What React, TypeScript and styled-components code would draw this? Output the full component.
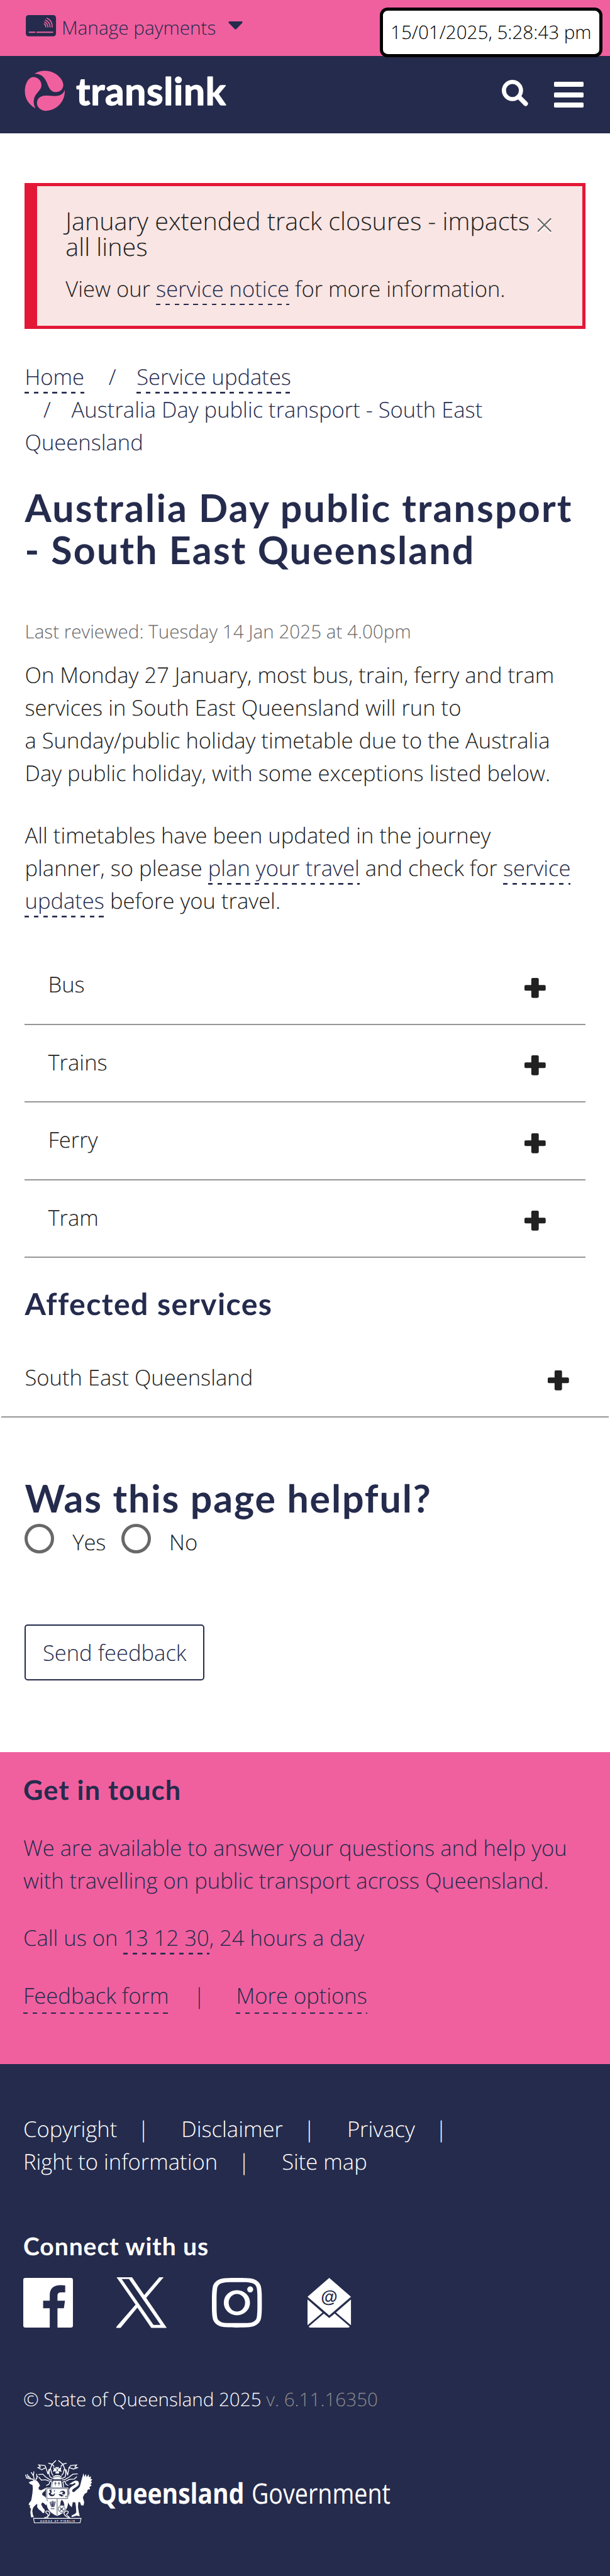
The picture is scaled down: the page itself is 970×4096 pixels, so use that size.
import React from "react";
import styled, { createGlobalStyle } from "styled-components";

const NAVY = "#252b4c";
const PINK = "#f0609f";
const INK = "#212121";
const GREY = "#686868";

/* Converts design pixels (1179 wide artboard) to page pixels (970 wide). */
const u = (n: number) => `${((n * 970) / 1179).toFixed(3)}px`;

const Global = createGlobalStyle`
  html, body { margin: 0; padding: 0; background: #fff; }
  body {
    font-family: "Open Sans", "Noto Sans", sans-serif;
    font-weight: 300;
    font-size: ${u(42)};
    line-height: ${u(63)};
    color: ${INK};
    text-rendering: geometricPrecision;
  }
  * { box-sizing: border-box; }
  h1, h2, h3, p { margin: 0; }
  svg { display: block; flex: none; overflow: visible; }
`;

const Page = styled.div`
  width: ${u(1179)};
  height: 4096px;
  overflow: hidden;
  display: flex;
  flex-direction: column;
  position: relative;
`;

const TopBar = styled.div`
  height: ${u(108)};
  background: ${PINK};
  color: ${NAVY};
  display: flex;
  align-items: flex-start;
  padding: ${u(26.5)} 0 0 ${u(49.5)};
  flex: none;
`;

const CardIcon = styled.svg`
  width: ${u(58.5)};
  height: ${u(41)};
  margin-top: ${u(2.5)};
`;

const Manage = styled.span`
  font-size: ${u(36.2)};
  line-height: ${u(54)};
  margin-left: ${u(11)};
  width: ${u(322)};
  white-space: nowrap;
`;

const Caret = styled.svg`
  width: ${u(28)};
  height: ${u(16)};
  margin-top: ${u(15)};
`;

const Clock = styled.div`
  position: absolute;
  top: ${u(15)};
  left: ${u(734)};
  width: ${u(430)};
  height: ${u(96)};
  border: 5px solid #000;
  border-radius: ${u(15)};
  background: #fff;
  color: #000;
  font-size: ${u(36)};
  line-height: ${u(83)};
  text-align: center;
  white-space: nowrap;
`;

const Header = styled.header`
  height: ${u(150)};
  background: ${NAVY};
  display: flex;
  align-items: flex-start;
  padding: ${u(28)} ${u(51)} 0 ${u(47.5)};
  flex: none;
`;

const Brand = styled.svg`
  width: ${u(393)};
  height: ${u(79)};
  margin-right: auto;
`;

const SearchIcon = styled.svg`
  width: ${u(51)};
  height: ${u(51)};
  margin: ${u(18)} ${u(50)} 0 0;
`;

const Burger = styled.div`
  width: ${u(57)};
  margin-top: ${u(22)};
  display: grid;
  gap: ${u(10.5)};
`;

const Bar = styled.i`
  height: ${u(9.8)};
  border-radius: ${u(2)};
  background: #fff;
`;

const Main = styled.main`
  padding: 0 ${u(48)};
  height: ${u(3128)};
  flex: none;
`;

const Alert = styled.section`
  position: relative;
  margin-top: ${u(96)};
  height: ${u(282)};
  background: #f9e5e3;
  border: 5px solid #e31836;
  border-left-width: 20px;
  padding: ${u(41.7)} 0 0 ${u(54.5)};
  white-space: nowrap;
`;

const AlertTitle = styled.p`
  font-size: ${u(48)};
  line-height: ${u(51)};
  margin-bottom: ${u(23.3)};
`;

const Close = styled.svg`
  position: absolute;
  top: ${u(60)};
  right: ${u(57.5)};
  width: ${u(29)};
  height: ${u(31)};
`;

const Link = styled.a`
  color: ${NAVY};
  padding-bottom: ${u(3.3)};
  background: repeating-linear-gradient(
      90deg,
      ${NAVY} 0 ${u(9)},
      transparent ${u(9)} ${u(18)}
    )
    left bottom / 100% ${u(3.3)} no-repeat;
`;

const Crumbs = styled.nav`
  margin-top: ${u(62)};
  color: ${NAVY};
  white-space: nowrap;
`;

const Slash = styled.span`
  margin: 0 ${u(39.8)} 0 ${u(36)};
`;

const Title = styled.h1<{ $top: number; $track: number }>`
  font-family: Lato, "Open Sans", sans-serif;
  font-weight: 700;
  color: ${NAVY};
  font-size: ${u(74)};
  line-height: ${u(81)};
  letter-spacing: ${(p) => u(p.$track)};
  margin-top: ${(p) => u(p.$top)};
  white-space: nowrap;
`;

const SubTitle = styled(Title)<{ $size: number; $line: number; $color?: string }>`
  font-size: ${(p) => u(p.$size)};
  line-height: ${(p) => u(p.$line)};
  color: ${(p) => p.$color ?? NAVY};
`;

const Reviewed = styled.p`
  margin-top: ${u(91.3)};
  font-size: ${u(36)};
  line-height: ${u(54)};
  color: ${GREY};
`;

const Para = styled.p<{ $top: number }>`
  margin-top: ${(p) => u(p.$top)};
  white-space: nowrap;
`;

const Accordion = styled.div`
  margin-top: ${u(57.6)};
`;

const Row = styled.div<{ $wide?: boolean }>`
  height: ${u(150)};
  display: flex;
  justify-content: space-between;
  border-bottom: ${u(3)} solid #969696;
  margin: ${(p) => (p.$wide ? `${u(32.8)} ${u(-45)} 0` : "0")};
  padding: ${u(41.5)} ${u(76)} 0 ${u(45)};
`;

const PlusIcon = styled.svg`
  width: ${u(41)};
  height: ${u(38.5)};
  margin-top: ${u(17.5)};
`;

const Choices = styled.div`
  margin-top: ${u(8)};
  height: ${u(57)};
  display: flex;
`;

const Radio = styled.label<{ $width: number }>`
  display: flex;
  width: ${(p) => u(p.$width)};
  gap: ${u(35)};
`;

const Dot = styled.i`
  width: ${u(57)};
  height: ${u(57)};
  border: 5px solid ${GREY};
  border-radius: 50%;
  flex: none;
`;

const RadioText = styled.span`
  margin-top: ${u(5.2)};
`;

const Button = styled.button`
  display: block;
  margin-top: ${u(138)};
  width: ${u(347)};
  height: ${u(108)};
  padding: ${u(2)} 0 0;
  border: ${u(3)} solid ${NAVY};
  border-radius: ${u(6)};
  background: #fff;
  color: ${NAVY};
  font: inherit;
  white-space: nowrap;
`;

const Contact = styled.section`
  height: ${u(603)};
  flex: none;
  background: ${PINK};
  color: ${NAVY};
  padding-left: ${u(45)};
`;

const LinkRow = styled.div<{ $top: number }>`
  margin-top: ${(p) => u(p.$top)};
  display: flex;
  flex-wrap: wrap;
  white-space: nowrap;
`;

const Sep = styled.span<{ $width: number; $at: number }>`
  width: ${(p) => u(p.$width)};
  padding-left: ${(p) => u(p.$at)};
`;

const Footer = styled.footer`
  flex: 1;
  background: ${NAVY};
  color: #fff;
  padding: 0 ${u(48)} 0 ${u(45)};
`;

const Social = styled.div`
  margin-top: ${u(31)};
  display: flex;
  height: ${u(98)};
`;

const SocialIcon = styled.svg<{ $w: number; $h: number; $x: number }>`
  width: ${(p) => u(p.$w)};
  height: ${(p) => u(p.$h)};
  margin-left: ${(p) => u(p.$x)};
  align-self: center;
`;

const Legal = styled.p`
  margin-top: ${u(111.5)};
  font-size: ${u(36)};
  line-height: ${u(54)};
`;

const Version = styled.span`
  color: #8c8c8c;
`;

const Gov = styled.svg`
  margin: ${u(87.5)} 0 0 ${u(3)};
  width: ${u(720)};
  height: ${u(126)};
`;

const Plus = () => (
  <PlusIcon viewBox="0 0 41 38.5">
    <rect x="13.2" width="14.4" height="38.5" rx="2.6" fill={INK} />
    <rect y="13.7" width="41" height="11" rx="2.6" fill={INK} />
  </PlusIcon>
);

const Crest = () => (
  <g fill="#fff" stroke="none">
    {/* deer */}
    <path d="M78 198 L92 191 L108 188 L118 189 L122 186 L128 191 L138 203 L144 218 L136 224 L136 238 L150 243 L165 236 L180 229 L172 246 L158 258 L156 270 L174 282 L184 300 L186 318 L178 330 L166 318 L158 314 L150 324 L160 344 L172 358 L168 374 L160 376 L150 364 L136 354 L127 340 L128 322 L118 328 L104 344 L99 362 L102 384 L108 398 L92 400 L88 372 L91 350 L84 342 L86 328 L78 330 L80 318 L92 304 L96 284 L100 258 L102 230 L100 212 L88 208 Z" />
    <path d="M110 190 L100 178 L84 178 M100 178 L66 172 L60 152 M76 174 L70 150 M92 178 L76 160 M112 190 L106 160 L92 138 M106 160 L108 134 M116 188 L126 172 L124 148 M120 180 L130 160" fill="none" stroke="#fff" strokeWidth="5" />
    {/* brolga */}
    <path d="M312 209 L336 192 L350 187 C368 186 374 202 366 214 C356 226 340 230 332 240 C326 252 338 258 346 250 C360 236 376 228 378 210 L386 178 L396 144 L401 166 L410 148 L414 168 L426 150 L428 168 L440 162 L437 178 L447 180 L438 192 L446 198 L436 208 L443 216 L430 224 L434 236 L420 240 L416 256 L402 264 L392 284 L400 312 L396 332 L382 330 L376 312 L366 312 L364 340 L369 372 L374 394 L356 390 L328 398 L326 390 L346 380 L354 372 L352 338 L348 314 L334 312 L328 342 L316 330 L304 312 L298 296 L308 284 L314 262 L312 240 C318 222 340 218 350 206 C348 198 340 202 334 208 Z" />
    {/* shield */}
    <path d="M178 228 H308 V292 L302 300 L306 316 C306 352 282 378 243 392 C206 378 182 352 182 318 L188 300 L178 292 Z" />
    <path d="M183 233 H303 V291 H183 Z M243 294 V388" fill="none" stroke={NAVY} strokeWidth="3" />
    <path d="M194 260 Q196 276 212 278 Q232 278 230 258 L222 268 Q210 272 206 262 L214 252 L196 242 L204 256 Z M198 242 L212 238 L208 248 Z M224 242 L232 246 L226 252 Z M250 268 Q262 262 270 268 L282 276 L268 280 Z M254 258 Q270 240 284 248 Q296 258 284 268 Q272 270 272 260 L280 256 L268 252 Z M290 276 h8 v6 h-8 Z" fill={NAVY} />
    <path d="M206 350 h22 M207 338 h20 M202 310 L208 334 M217 304 V336 M232 308 L226 334 M210 308 L213 334 M224 308 L221 334" fill="none" stroke={NAVY} strokeWidth="4" />
    <path d="M260 332 L264 308 L270 298 L280 310 L286 334 Q270 326 260 332 Z" fill={NAVY} />
    <circle cx="269" cy="351" r="20" fill="#fff" stroke={NAVY} strokeWidth="3" />
    <path d="M258 342 L280 362 M280 342 L258 362" stroke={NAVY} strokeWidth="4" fill="none" />
    {/* helmet, crown and plumes */}
    <path d="M220 188 H266 L272 226 H212 Z M218 164 Q244 146 270 164 L266 182 H222 Z M219 108 L232 118 L236 106 L243 112 L250 106 L254 118 L268 108 L264 124 L270 136 L254 132 L254 146 L234 146 L234 132 L218 136 L224 122 Z" />
    <path d="M233 194 V216 M226 202 H240 M254 194 V216 M247 202 H261" stroke={NAVY} strokeWidth="3" fill="none" />
    <path d="M218 170 Q244 158 270 170 M220 180 H268 M238 116 L250 136 M250 116 L238 136" stroke={NAVY} strokeWidth="3" fill="none" />
    <path d="M236 70 L214 92 L204 116 L212 146 L220 158 M250 70 L276 92 L286 116 L278 146 L268 158 M192 86 L214 92 L226 106 M298 86 L276 92 L264 106 M204 116 Q190 140 202 166 L220 176 M286 116 Q298 140 290 166 L268 176 M136 96 L172 100 L178 112 L154 124 L132 112 L146 108 Z M178 112 L190 150 L196 120 M356 96 L322 100 L312 112 L338 120 L360 112 L346 108 Z M312 112 L304 156 L294 122 M134 152 L160 150 L176 166 L200 182 L214 184 M136 166 L152 184 L176 182 L196 190 M362 148 L334 150 L314 166 L290 180 L272 184 M358 164 L342 178 L314 180 L294 190 M180 216 L196 208 L202 190 L214 196 L208 226 M308 216 L294 208 L288 190 L276 196 L282 226" fill="none" stroke="#fff" strokeWidth="5" />
    {/* scroll and motto */}
    <path d="M106 406 H382 L376 432 H111 Z" fill="none" stroke="#fff" strokeWidth="4" />
    <path d="M168 404 Q200 396 200 376 Q196 360 180 364 Q172 372 184 378 Q194 382 188 404 M318 404 Q286 396 282 376 Q290 360 304 364 Q312 372 302 378 Q290 382 314 400" fill="none" stroke="#fff" strokeWidth="5" />
    <text x="144" y="425" fontFamily="Liberation Sans" fontWeight="700" fontSize="15" textLength="202">
      AUDAX AT FIDELIS
    </text>
  </g>
);

export default function App() {
  return (
    <Page>
      <Global />
      <TopBar>
        <CardIcon viewBox="0 0 175 123">
          <rect width="175" height="123" rx="16" fill={NAVY} />
          <g fill="none" stroke={PINK} strokeWidth="6" strokeLinecap="round">
            <path d="M20 99.500 H52 M64 99.500 H156" strokeWidth="7" />
            <path d="M107 51 Q116 56 116 69 M109 40 Q127 48 128 69 M114 29 Q139 40 141 69 M123 18 Q154 32 153 69" />
          </g>
        </CardIcon>
        <Manage>Manage payments</Manage>
        <Caret viewBox="0 0 28 16">
          <path d="M1.500 0 H26.500 Q28.500 1 27 3 L15.500 14.800 Q14 16 12.500 14.800 L1 3 Q-.5 1 1.500 0 Z" fill={NAVY} />
        </Caret>
      </TopBar>
      <Clock>15/01/2025, 5:28:43 pm</Clock>
      <Header>
        <Brand viewBox="52 378 1179 237">
          <g fill={PINK}>
            <path d="M109 397 C130 384 150 380 172 380 C235 382 277 430 277 463 C275 492 255 504 232 504 C205 504 193 480 184 455 C172 425 155 397 109 397 Z" />
            <path d="M116 598 C75 575 54 540 54 498 C54 455 75 416 105 416 C132 418 151 440 150 465 C149 490 125 505 112 528 C102 550 103 575 116 598 Z" />
            <path d="M285 490 C290 560 235 612 172 612 C143 610 124 590 124 568 C124 540 145 525 172 524 C200 524 225 530 250 524 C268 518 280 508 285 490 Z" />
          </g>
          <text
            x="351"
            y="577"
            fontFamily="Lato, sans-serif"
            fontWeight="700"
            fontSize="220"
            textLength="868"
            lengthAdjust="spacing"
            fill="#fff"
            stroke="#fff"
            strokeWidth="5"
            strokeLinejoin="round"
          >
            translink
          </text>
        </Brand>
        <SearchIcon viewBox="0 0 51 51">
          <circle cx="20.500" cy="20.500" r="16.500" fill="none" stroke="#fff" strokeWidth="8" />
          <path d="M33 33 L46 46" stroke="#fff" strokeWidth="9" strokeLinecap="round" />
        </SearchIcon>
        <Burger>
          <Bar />
          <Bar />
          <Bar />
        </Burger>
      </Header>

      <Main>
        <Alert>
          <AlertTitle>
            January extended track closures - impacts
            <br />
            all lines
          </AlertTitle>
          <p>
            View our <Link>service notice</Link> for more information.
          </p>
          <Close viewBox="0 0 29 31">
            <path d="M1.500 4.500 L27 30 M27 4.500 L1.500 30" stroke="#fff" strokeWidth="2.500" />
            <path d="M1.500 1.500 L27 27 M27 1.500 L1.500 27" stroke={GREY} strokeWidth="2.800" />
          </Close>
        </Alert>

        <Crumbs>
          <Link>Home</Link> <Slash>/</Slash>
          <Link>Service updates</Link>
          <br />
          <Slash>/</Slash>Australia Day public transport - South East
          <br />
          Queensland
        </Crumbs>

        <Title $top={53.7} $track={2.65}>
          Australia Day public transport
          <br />- South East Queensland
        </Title>
        <Reviewed>Last reviewed: Tuesday 14 Jan 2025 at 4.00pm</Reviewed>
        <Para $top={26.4}>
          On Monday 27 January, most bus, train, ferry and tram
          <br />
          services in South East Queensland will run to
          <br />a Sunday/public holiday timetable due to the Australia
          <br />
          Day public holiday, with some exceptions listed below.
        </Para>
        <Para $top={58}>
          All timetables have been updated in the journey
          <br />
          planner, so please <Link>plan your travel</Link> and check for <Link>service</Link>
          <br />
          <Link>updates</Link> before you travel.
        </Para>

        <Accordion>
          {["Bus", "Trains", "Ferry", "Tram"].map((name) => (
            <Row key={name}>
              {name}
              <Plus />
            </Row>
          ))}
        </Accordion>

        <SubTitle as="h2" $top={54.2} $track={1.7} $size={58.6} $line={72}>
          Affected services
        </SubTitle>
        <Row $wide>
          South East Queensland
          <Plus />
        </Row>

        <Title as="h2" $top={115.9} $track={2.25}>
          Was this page helpful?
        </Title>
        <Choices>
          <Radio $width={187}>
            <Dot />
            <RadioText>Yes</RadioText>
          </Radio>
          <Radio $width={187}>
            <Dot />
            <RadioText>No</RadioText>
          </Radio>
        </Choices>
        <Button>Send feedback</Button>
      </Main>

      <Contact>
        <SubTitle as="h3" $top={43} $track={1.5} $size={52.5} $line={63}>
          Get in touch
        </SubTitle>
        <Para $top={49}>
          We are available to answer your questions and help you
          <br />
          with travelling on public transport across Queensland.
        </Para>
        <Para $top={48}>
          Call us on <Link>13 12 30</Link>, 24 hours a day
        </Para>
        <LinkRow $top={48}>
          <Link>Feedback form</Link>
          <Sep $width={130} $at={47.5}>|</Sep>
          <Link>More options</Link>
        </LinkRow>
      </Contact>

      <Footer>
        <LinkRow $top={95.2}>
          <span>Copyright</span>
          <Sep $width={124} $at={39.5}>|</Sep>
          <span>Disclaimer</span>
          <Sep $width={124} $at={39.5}>|</Sep>
          <span>Privacy</span>
          <Sep $width={124} $at={39.5}>|</Sep>
          <span>Right to information</span>
          <Sep $width={124} $at={39.5}>|</Sep>
          <span>Site map</span>
        </LinkRow>
        <SubTitle as="h3" $top={103} $track={1.1} $size={47.5} $line={57} $color="#fff">
          Connect with us
        </SubTitle>
        <Social>
          <SocialIcon $w={96} $h={96} $x={0} viewBox="35 66 225 288" preserveAspectRatio="none">
            <path
              fill="#fff"
              d="M45 66 H250 Q260 66 260 78 V342 Q260 354 250 354 H190 V242 H219 L224 198 H190 V168 Q190 150 207 150 H225 V110 L205 108 C172 108 155 128 155 165 V198 H125 V242 H155 V354 H45 Q35 354 35 342 V78 Q35 66 45 66 Z"
            />
          </SocialIcon>
          <SocialIcon $w={97.5} $h={98} $x={84} viewBox="456 63 228 294" preserveAspectRatio="none">
            <path
              fill="#fff"
              fillRule="evenodd"
              d="M457 63 H527 L582 166 L650 63 H670 L591 182 L684 357 H614 L551 239 L475 357 H456 V350 L543 222 Z M480 73 L624 339 H656 L513 73 Z"
            />
          </SocialIcon>
          <SocialIcon $w={96.5} $h={96} $x={87} viewBox="888 66 225 288" preserveAspectRatio="none">
            <path
              fill="#fff"
              fillRule="evenodd"
              d="M1000 66 C1040 66 1054 67 1066 70 C1092 76 1107 97 1110 124 C1113 150 1113 170 1113 210 C1113 250 1113 270 1110 296 C1107 323 1092 344 1066 350 C1054 353 1040 354 1000 354 C961 354 947 353 935 350 C909 344 894 323 891 296 C888 270 888 250 888 210 C888 170 888 150 891 124 C894 97 909 76 935 70 C947 67 961 66 1000 66 Z M1000 91 C962 91 950 92 940 94 C921 98 912 112 911 133 C909 158 909 170 909 210 C909 250 909 262 911 287 C912 308 921 322 940 326 C950 328 962 328 1000 328 C1040 328 1052 328 1062 326 C1081 322 1090 308 1091 287 C1093 262 1093 250 1093 210 C1093 170 1093 158 1091 133 C1090 112 1081 98 1062 94 C1052 92 1040 91 1000 91 Z"
            />
            <ellipse cx="1000.500" cy="210" rx="48" ry="62" fill="none" stroke="#fff" strokeWidth="22" />
            <ellipse cx="1060.500" cy="133" rx="13.500" ry="17.500" fill="#fff" />
          </SocialIcon>
          <SocialIcon $w={84} $h={96} $x={88.5} viewBox="0 0 84 96">
            <path
              fill="#fff"
              d="M42 0 L84 36.500 L42 72.500 L0 36.500 Z M0 41.500 L29 67 L0 91.500 Z M84 41.500 L55 67 L84 91.500 Z M2.500 94 L31.500 69 L42 77.500 L52.500 69 L81.500 94 Q81 96 79 96 H5 Q3 96 2.500 94 Z"
            />
            <text x="42" y="47.500" textAnchor="middle" fontFamily="Liberation Sans" fontWeight="700" fontSize="33" fill={NAVY}>
              @
            </text>
          </SocialIcon>
        </Social>
        <Legal>
          © State of Queensland 2025 <Version>v. 6.11.16350</Version>
        </Legal>
        <Gov viewBox="54 62 2160 378">
          <Crest />
          <g fontFamily="'Open Sans', sans-serif" fontSize="164" fill="#fff">
            <text x="476" y="320" fontWeight="700" textLength="852" lengthAdjust="spacingAndGlyphs">
              Queensland
            </text>
            <text x="1370" y="320" fontWeight="400" textLength="806" lengthAdjust="spacingAndGlyphs">
              Government
            </text>
          </g>
        </Gov>
      </Footer>
    </Page>
  );
}
